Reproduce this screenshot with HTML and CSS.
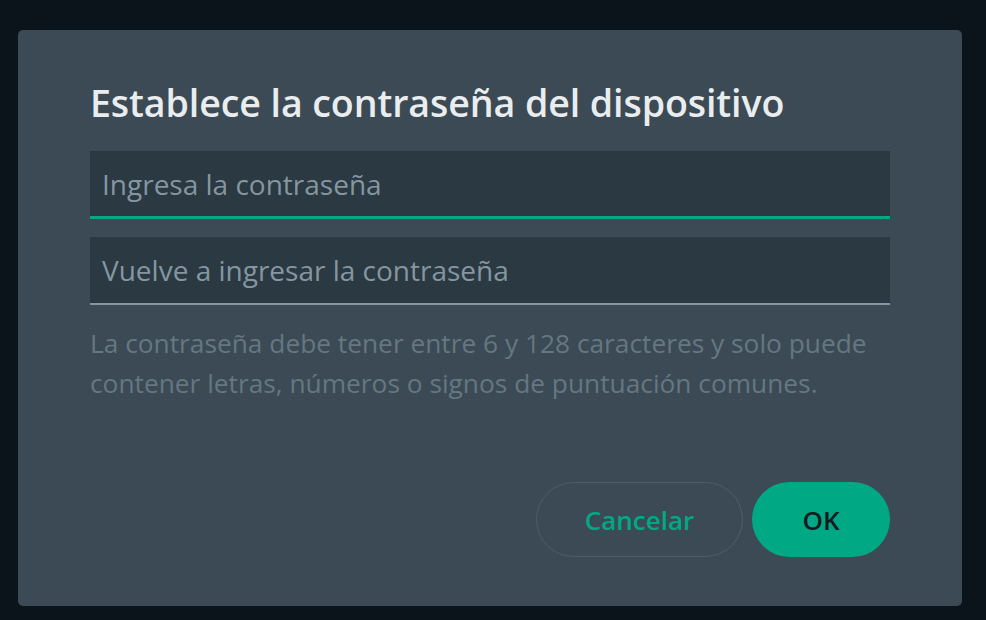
FILE: index.html
```html
<!DOCTYPE html>
<html lang="es">
<head>
    <meta charset="UTF-8">
    <title>Establece la contraseña del dispositivo</title>
    <link rel="stylesheet" href="styles.css">
</head>
<body>

<div class="dialog">
    <h1 class="dialog-title">Establece la contraseña del dispositivo</h1>
    <form class="password-form">
        <div class="field active">
            <input type="password" placeholder="Ingresa la contraseña">
        </div>
        <div class="field">
            <input type="password" placeholder="Vuelve a ingresar la contraseña">
        </div>
        <p class="hint">La contraseña debe tener entre 6 y 128 caracteres y solo puede contener letras, números o signos de puntuación comunes.</p>
        <div class="actions">
            <button type="button" class="btn btn-outline">Cancelar</button>
            <button type="submit" class="btn btn-primary">OK</button>
        </div>
    </form>
</div>

</body>
</html>
```

FILE: styles.css
```css
body {
    margin: 0;
    padding: 30px 24px 0 18px;
    background-color: #0b141a;
    font-family: "Open Sans", "Noto Sans", sans-serif;
}
.dialog {
    width: 944px;
    height: 576px;
    box-sizing: border-box;
    padding: 52px 72px 0 72px;
    background-color: #3b4a54;
    border-radius: 5px;
}
.dialog-title {
    margin: 0 0 27px 0;
    font-size: 37.6px;
    line-height: 42px;
    font-weight: 600;
    letter-spacing: -0.1px;
    color: #e9edef;
}
.field {
    height: 68px;
    box-sizing: border-box;
    margin-bottom: 18px;
    background-color: #2a3942;
    border-bottom: 2px solid #8696a0;
}
.field.active {
    border-bottom: 3px solid #00a884;
}
.field input {
    width: 100%;
    height: 100%;
    box-sizing: border-box;
    padding: 0 12px;
    border: none;
    outline: none;
    background: transparent;
    font-family: inherit;
    font-size: 28px;
    color: #d1d7db;
}
.field input::placeholder {
    color: #8696a0;
}
.hint {
    margin: 0;
    font-size: 26.3px;
    line-height: 40px;
    color: #667781;
}
.actions {
    display: flex;
    justify-content: flex-end;
    gap: 9px;
    margin-top: 79px;
}
.btn {
    height: 75px;
    border-radius: 38px;
    font-family: inherit;
    font-size: 26px;
    font-weight: 600;
    cursor: pointer;
}
.btn-outline {
    width: 207px;
    background: transparent;
    border: 1px solid #4e5e68;
    color: #00a884;
}
.btn-primary {
    width: 138px;
    border: none;
    background-color: #00a884;
    color: #111b21;
}
```
